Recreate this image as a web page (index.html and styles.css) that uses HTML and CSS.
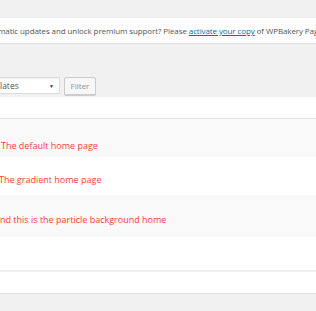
FILE: index.html
```html
<!DOCTYPE html>
<html>
<head>
<meta charset="utf-8">
<link rel="stylesheet" href="styles.css">
</head>
<body>
<div class="wrap">
  <div class="notice">
    <p class="notice-text">matic updates and unlock premium support? Please <a href="#" class="link">activate your copy</a> of WPBakery Page Builder.</p>
  </div>
  <div class="tablenav">
    <div class="select"><span class="select-label">lates</span><span class="arrow">&#9660;</span></div>
    <button class="btn">Filter</button>
  </div>
  <div class="list">
    <div class="list-head"></div>
    <div class="row row-alt row-1"><span class="desc desc-1">The default home page</span></div>
    <div class="row row-2"><span class="desc desc-2">The gradient home page</span></div>
    <div class="row row-alt row-3"><span class="desc desc-3">nd this is the particle background home</span></div>
    <div class="row row-4"></div>
    <div class="list-foot"></div>
  </div>
</div>
</body>
</html>
```

FILE: styles.css
```css
* { box-sizing: border-box; }
html, body { margin: 0; padding: 0; }
body {
  background: #f1f1f1;
  font-family: "Open Sans", "Noto Sans", sans-serif;
  font-size: 9px;
  color: #444;
  overflow: hidden;
  width: 316px;
  height: 311px;
}
.wrap {
  padding-top: 18px;
}
.notice {
  background: #fff;
  height: 25px;
  box-shadow: 0 1px 1px rgba(0,0,0,.06);
  display: flex;
  align-items: center;
  overflow: hidden;
  padding-top: 1px;
}
.notice-text {
  margin: 0 0 0 -2px;
  white-space: nowrap;
  line-height: 12px;
  font-size: 8px;
  letter-spacing: -0.1px;
  color: #555;
}
.link { color: #0073aa; text-decoration: underline; }
.tablenav {
  height: 54px;
  display: flex;
  align-items: flex-end;
  gap: 4px;
  padding-bottom: 2px;
}
.select {
  width: 60px;
  height: 17px;
  background: #fff;
  border: 1px solid #ddd;
  border-left: none;
  display: flex;
  align-items: center;
  justify-content: space-between;
  padding: 0 5px 0 0;
  box-shadow: inset 0 1px 2px rgba(0,0,0,.07);
  margin-bottom: 1px;
}
.select-label { color: #555; line-height: 12px; font-size: 8.5px; }
.arrow { font-size: 5px; color: #333; }
.btn {
  width: 32px;
  height: 18px;
  margin: 0;
  padding: 0;
  background: #f7f7f7;
  border: 1px solid #ccc;
  border-radius: 2px;
  box-shadow: 0 1px 0 #ccc;
  font-family: inherit;
  font-size: 8px;
  color: #8f8f8f;
  line-height: 16px;
}
.list {
  background: #fff;
  box-shadow: 0 1px 1px rgba(0,0,0,.06);
}
.list-head {
  height: 22px;
  border-bottom: 1px solid #e5e5e5;
}
.row { background: #fff; color: #ff3c3c; line-height: 14px; }
.row-alt { background: #f9f9f9; }
.row-1 { height: 38px; padding-top: 20px; }
.row-2 { height: 38px; padding-top: 16px; }
.row-3 { height: 42px; padding-top: 18px; }
.row-4 { height: 33px; }
.desc { display: block; white-space: nowrap; }
.desc-1 { margin-left: 1px; }
.desc-2 { margin-left: -1px; }
.desc-3 { margin-left: 0; }
.list-foot {
  height: 23px;
  border-top: 2px solid #f1f1f1;
}
```
